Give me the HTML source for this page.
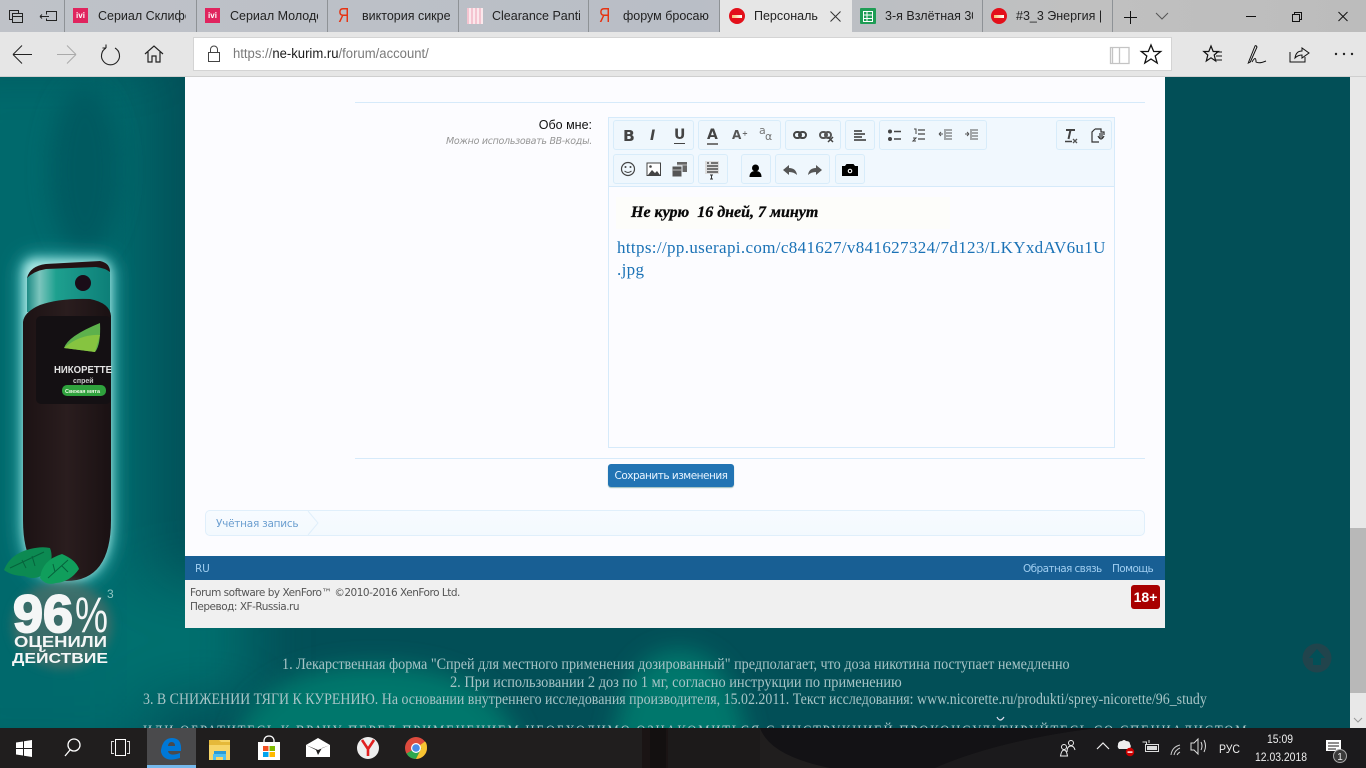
<!DOCTYPE html>
<html lang="ru"><head><meta charset="utf-8"><title>Персональные данные</title>
<style>
*{box-sizing:border-box}
html,body{margin:0;padding:0;width:1366px;height:768px;overflow:hidden;font-family:"Liberation Sans","DejaVu Sans",sans-serif;background:#024f57}
body{position:relative}
.a{position:absolute}
.t{position:absolute;white-space:nowrap}
svg{position:absolute;overflow:visible}
.tab{position:absolute;top:0;height:32px;border-right:1px solid #8e9296;overflow:hidden}
.tab span{position:absolute;left:32px;top:9px;font-size:12.5px;color:#222;white-space:nowrap;width:88px;overflow:hidden}
.ivi{position:absolute;left:8px;top:8px;width:15px;height:15px;background:#e0245e;color:#fff;font-size:8px;font-weight:bold;text-align:center;line-height:15px}
.ya{position:absolute;left:10px;top:6px;color:#e63312;font-size:20px;line-height:20px;transform-origin:0 0;transform:scaleX(.78)}
.stop{position:absolute;left:7px;top:8px;width:16px;height:16px;border-radius:50%;background:#e3101a}
.stop:after{content:"";position:absolute;left:3px;top:6.5px;width:10px;height:3px;background:linear-gradient(90deg,#f8c070,#fff)}
.grp{position:absolute;background:#eff7fd;border:1px solid #d8ecfa;border-radius:3px;height:30px}
.sc{font-family:"Liberation Serif",serif;color:#a7c4c6}
.sc span{position:absolute;display:block;transform-origin:0 0;white-space:nowrap}
</style></head><body>

<!-- page background -->
<svg style="left:0;top:0;overflow:hidden" width="1366" height="768" viewBox="0 0 1366 768">
<defs>
<filter id="b1" x="-50%" y="-50%" width="200%" height="200%"><feGaussianBlur stdDeviation="30"/></filter>
<filter id="b3" x="-50%" y="-50%" width="200%" height="200%"><feGaussianBlur stdDeviation="12"/></filter>
<filter id="b2" x="-50%" y="-50%" width="200%" height="200%"><feGaussianBlur stdDeviation="5"/></filter>
<filter id="b4" x="-50%" y="-50%" width="200%" height="200%"><feGaussianBlur stdDeviation="9"/></filter>
<linearGradient id="can" x1="0" x2="1"><stop offset="0" stop-color="#1c1214"/><stop offset=".5" stop-color="#2a1d1e"/><stop offset="1" stop-color="#1a1113"/></linearGradient>
<linearGradient id="cap" x1="0" x2="1"><stop offset="0" stop-color="#1d8b85"/><stop offset=".15" stop-color="#7cc5bd"/><stop offset=".35" stop-color="#1ea08f"/><stop offset="1" stop-color="#0d7f78"/></linearGradient>
</defs>
<rect width="1366" height="768" fill="#024f57"/>
<g filter="url(#b1)">
<rect x="-60" y="60" width="215" height="708" fill="#03696c"/>
<path d="M90 580H250V700H90Z" fill="#02706e"/>
</g>
<ellipse cx="85" cy="170" rx="35" ry="85" fill="#025a60" filter="url(#b3)"/>
<path d="M230 768Q240 665 375 665Q510 665 525 768Z" fill="#03776c" filter="url(#b3)"/>
<path d="M610 768Q620 650 678 650Q740 650 750 768Z" fill="#03776c" filter="url(#b3)"/>
<!-- spray can -->
<path d="M18 272Q20 254 38 254L100 256Q116 258 116 274V520Q116 586 66 586Q18 586 18 520Z" fill="#2fa6a6" filter="url(#b4)"/>
<path d="M23 272Q24 259 36 259L100 260Q111 262 111 274V520Q111 581 66 581Q23 581 23 520Z" fill="#a9e6e3" filter="url(#b2)"/>
<path d="M27 312V278Q30 266 46 264L100 262Q110 264 110 274V312Z" fill="url(#cap)"/>
<path d="M27 278Q30 266 46 264L100 261Q110 263 110 272Q105 268 96 267L46 269Q34 271 27 278Z" fill="#241214"/>
<circle cx="83" cy="283" r="8" fill="#1a0d18"/>
<path d="M23 322Q24 312 40 305Q60 298 90 299Q110 303 111 316V520Q111 581 66 581Q23 581 23 520Z" fill="url(#can)"/>
<rect x="36" y="316" width="75" height="88" rx="5" fill="#141013"/>
<path d="M100 323Q101 345 95 352L64 348Q68 336 100 323Z" fill="#5db14c"/>
<path d="M64 348L95 352L100 335Q80 334 64 348Z" fill="#86c440"/>
<rect x="62" y="385" width="44" height="11" rx="5" fill="#2fa23d"/>
<text x="54" y="373" font-family="Liberation Sans" font-size="10" font-weight="bold" fill="#e4e4e4" textLength="58" lengthAdjust="spacingAndGlyphs">НИКОРЕТТЕ</text>
<text x="73" y="383" font-family="Liberation Sans" font-size="7" font-weight="bold" fill="#c8c8c8">спрей</text>
<text x="65" y="393" font-family="Liberation Sans" font-size="5.500" font-weight="bold" fill="#e8f5e0">Свежая мята</text>
<ellipse cx="62" cy="625" rx="50" ry="44" fill="#526e68" opacity=".7" filter="url(#b2)"/>
<!-- mint leaf -->
<path d="M4 570Q10 554 30 549Q42 546 50 548Q54 558 48 570Q38 582 24 576Q12 576 4 570Z" fill="#0c8a52"/>
<path d="M40 578Q42 560 62 554Q76 560 79 569Q70 582 56 583Q46 586 40 578Z" fill="#109e5c"/>
<path d="M10 568L44 552M22 560l4 8M32 556l3 10M48 578L68 560M55 572l-2-8M62 566l6 6" stroke="#06633c" fill="none"/>
<g font-family="Liberation Sans" font-weight="bold" fill="#f4f6f6">
<text x="13" y="632" font-size="53" stroke="#f4f6f6" stroke-width="2" textLength="60" lengthAdjust="spacingAndGlyphs">96</text>
<text x="75" y="632" font-size="50" font-weight="normal" textLength="33" lengthAdjust="spacingAndGlyphs">%</text>
<text x="14" y="647" font-size="16" textLength="93" lengthAdjust="spacingAndGlyphs">ОЦЕНИЛИ</text>
<text x="12" y="663" font-size="15" textLength="96" lengthAdjust="spacingAndGlyphs">ДЕЙСТВИЕ</text>
</g>
<text x="107" y="598" font-family="Liberation Sans" font-size="12" fill="#8fc5c2">3</text>
<!-- back to top -->
<circle cx="1317" cy="658" r="14.500" fill="#21444c"/>
<path d="M1317 649l8 9h-4v7h-8v-7h-4z" fill="#024f57"/>
<path d="M997 717Q1000 723 1004 717" stroke="#dde" stroke-width="1.200" fill="none"/>
</svg>

<div class="sc a" style="left:0;top:656px;width:1350px;height:72px;font-size:16px;line-height:17px;overflow:hidden">
<span style="left:282px;top:0;transform:scaleX(.886)">1. Лекарственная форма "Спрей для местного применения дозированный" предполагает, что доза никотина поступает немедленно</span>
<span style="left:450px;top:18px;transform:scaleX(.897)">2. При использовании 2 доз по 1 мг, согласно инструкции по применению</span>
<span style="left:143px;top:35px;transform:scaleX(.87)">3. В СНИЖЕНИИ ТЯГИ К КУРЕНИЮ. На основании внутреннего исследования производителя, 15.02.2011. Текст исследования: www.nicorette.ru/produkti/sprey-nicorette/96_study</span>
<span style="left:143px;top:55px;height:17px;overflow:hidden;padding-top:12px;line-height:17px;letter-spacing:2.2px;transform:scaleX(.795)">ИЛИ ОБРАТИТЕСЬ К ВРАЧУ ПЕРЕД ПРИМЕНЕНИЕМ НЕОБХОДИМО ОЗНАКОМИТЬСЯ С ИНСТРУКЦИЕЙ ПРОКОНСУЛЬТИРУЙТЕСЬ СО СПЕЦИАЛИСТОМ</span>
</div>

<!-- forum content -->
<div class="a" style="left:185px;top:77px;width:980px;height:479px;background:#fcfcff"></div>
<div class="a" style="left:355px;top:102px;width:790px;height:1px;background:#d6eafa"></div>
<div class="a" style="left:355px;top:458px;width:790px;height:1px;background:#d6eafa"></div>
<div class="t" style="left:492px;width:100px;text-align:right;top:118px;font-size:12.500px;color:#111">Обо мне:</div>
<div class="t" style="left:412px;width:180px;text-align:right;top:136px;font-size:9.500px;color:#969696;font-style:italic;font-family:'DejaVu Sans',sans-serif;letter-spacing:-.3px">Можно использовать BB-коды.</div>

<!-- editor -->
<div class="a" style="left:608px;top:117px;width:507px;height:331px;background:#fcfcff;border:1px solid #d6eafa"></div>
<div class="a" style="left:609px;top:118px;width:505px;height:69px;background:#f1f8fe;border-bottom:1px solid #d6eafa"></div>
<div class="grp" style="left:613px;top:120px;width:81px"></div>
<div class="grp" style="left:698px;top:120px;width:83px"></div>
<div class="grp" style="left:785px;top:120px;width:56px"></div>
<div class="grp" style="left:845px;top:120px;width:30px"></div>
<div class="grp" style="left:879px;top:120px;width:108px"></div>
<div class="grp" style="left:1056px;top:120px;width:56px"></div>
<div class="grp" style="left:613px;top:154px;width:81px"></div>
<div class="grp" style="left:698px;top:154px;width:30px"></div>
<div class="grp" style="left:741px;top:154px;width:30px"></div>
<div class="grp" style="left:775px;top:154px;width:55px"></div>
<div class="grp" style="left:835px;top:154px;width:30px"></div>
<div class="t" style="left:623px;top:127px;font:bold 15.500px 'DejaVu Sans',sans-serif;color:#444">B</div>
<div class="t" style="left:650px;top:128px;font:italic bold 14px 'DejaVu Sans',sans-serif;color:#444">I</div>
<div class="t" style="left:674px;top:128px;font:bold 14px 'DejaVu Sans',sans-serif;color:#444;border-bottom:1.500px solid #444;line-height:15px">U</div>
<div class="t" style="left:707px;top:128px;font:bold 14px 'DejaVu Sans',sans-serif;color:#444;border-bottom:2px solid #777;line-height:15px">A</div>
<div class="t" style="left:732px;top:128px;font:bold 12px 'DejaVu Sans',sans-serif;color:#555">A</div>
<div class="t" style="left:742px;top:130px;font:bold 7px 'DejaVu Sans',sans-serif;color:#555">÷</div>
<div class="t" style="left:759px;top:124px;font:11px 'DejaVu Sans',sans-serif;color:#777">a</div>
<div class="t" style="left:765px;top:130px;font:11px 'DejaVu Sans',sans-serif;color:#777">α</div>
<svg style="left:0;top:0" width="1366" height="768" viewBox="0 0 1366 768" fill="none">
<g stroke="#444" stroke-width="2"><rect x="794" y="132" width="7" height="6" rx="3"/><rect x="799" y="132" width="7" height="6" rx="3"/></g>
<g stroke="#555" stroke-width="2"><rect x="820" y="132" width="7" height="6" rx="3"/><rect x="825" y="132" width="6" height="6" rx="3"/></g>
<path d="M828 137l5 5M833 137l-5 5" stroke="#444" stroke-width="1.500"/>
<path d="M854 131h8M854 134h11M854 137h8M854 140h12" stroke="#333" stroke-width="1.500"/>
<g fill="#444"><circle cx="890" cy="131.500" r="2"/><circle cx="890" cy="139" r="2"/></g>
<path d="M894 131.500h7M894 139h7" stroke="#444" stroke-width="1.500"/>
<path d="M914 129h2v5M913 138h3l-3 3h3" stroke="#444"/>
<path d="M918 130h7M918 134h7M918 139h7" stroke="#444" stroke-width="1.300"/>
<path d="M939 134h4M939 134l2-2M939 134l2 2M946 130h6M946 133h6M946 136h6M946 139h6M945 129v11" stroke="#555"/>
<path d="M965 134h4M969 134l-2-2M969 134l-2 2M972 130h6M972 133h6M972 136h6M972 139h6M971 129v11" stroke="#555"/>
<path d="M1066 130h9M1070.500 130l-2 9" stroke="#444" stroke-width="2"/>
<path d="M1065 141.500h7" stroke="#444" stroke-width="1.500"/>
<path d="M1073 139l4 4M1077 139l-4 4" stroke="#555" stroke-width="1.300"/>
<path d="M1095 129h6v3h3v3M1095 129l-3 3v10h7" stroke="#333" stroke-width="1.200"/>
<path d="M1100 133v6M1102 133v6M1098 136q3 6 6 0" stroke="#333" stroke-width="1.200"/>
<circle cx="628" cy="169" r="6.500" stroke="#444" stroke-width="1.200"/>
<circle cx="625.500" cy="167" r="1" fill="#444"/><circle cx="630.500" cy="167" r="1" fill="#444"/>
<path d="M624.500 171q3.500 3 7 0" stroke="#444"/>
<rect x="647" y="163" width="13.500" height="12.500" fill="#fff" stroke="#444"/>
<path d="M648 175l4-5 3 3 2-2 3 4z" fill="#444"/><circle cx="650.500" cy="166.500" r="1.300" fill="#444"/>
<rect x="677" y="162" width="10" height="10" fill="#666"/><rect x="672" y="166" width="10" height="11" fill="#555" stroke="#eff7fd"/>
<path d="M677 165h10M672 170h10" stroke="#bbb"/>
<rect x="705" y="161" width="14" height="13" fill="#ddd"/>
<path d="M707 163h2M711 163h7M707 166h11M707 169h11M707 172h11" stroke="#333" stroke-width="1.300"/>
<path d="M710 175h3M711.500 175v4M710 179h3" stroke="#333"/>
<circle cx="755.500" cy="168" r="3.500" fill="#000"/>
<path d="M749.500 177q0-6 6-6q6 0 6 6z" fill="#000"/>
<path d="M783 170l6-5v3q7 0 8 7q-3-3-8-3v3z" fill="#555"/>
<path d="M822 170l-6-5v3q-7 0-8 7q3-3 8-3v3z" fill="#555"/>
<path d="M842 166h3l1.500-2h7l1.500 2h3v10h-16z" fill="#000"/><circle cx="850" cy="171" r="2.300" fill="#fff"/><circle cx="850" cy="171" r="1.200" fill="#000"/>
</svg>

<div class="a" style="left:616px;top:197px;width:334px;height:32px;background:#fdfdfa"></div>
<div class="t" style="left:631px;top:204px;font:italic bold 16px 'Liberation Serif',serif;color:#0a0a0a;-webkit-text-stroke:.3px #000">Не курю&nbsp; 16 дней, 7 минут</div>
<div class="t" style="left:617px;top:237px;font:17px/22px 'Liberation Serif',serif;color:#1a72b6;letter-spacing:.35px">https://pp.userapi.com/c841627/v841627324/7d123/LKYxdAV6u1U<br>.jpg</div>

<div class="a" style="left:608px;top:464px;width:126px;height:23px;background:#2274b4;border-radius:3px;box-shadow:0 1px 1px #9bb"></div>
<div class="t" style="left:608px;width:126px;text-align:center;top:470px;font:10.500px 'DejaVu Sans',sans-serif;letter-spacing:-.5px;color:#e8f4ff">Сохранить изменения</div>

<!-- breadcrumb -->
<div class="a" style="left:205px;top:510px;width:940px;height:26px;background:linear-gradient(#f7fbff,#f3f9fe);border:1px solid #e0effb;border-radius:5px"></div>
<svg style="left:0;top:0" width="1366" height="768" fill="none"><path d="M308 511L318 523L308 535" stroke="#e0effb"/></svg>
<div class="t" style="left:216px;top:518px;font:10.500px 'DejaVu Sans',sans-serif;letter-spacing:-.25px;color:#6b9fd0">Учётная запись</div>

<!-- footer -->
<div class="a" style="left:185px;top:556px;width:980px;height:24px;background:#185f94"></div>
<div class="t" style="left:195px;top:563px;font:10.500px 'DejaVu Sans',sans-serif;color:#9fcdf0;letter-spacing:-.2px">RU</div>
<div class="t" style="left:1023px;top:563px;font:10.500px 'DejaVu Sans',sans-serif;color:#9fcdf0;letter-spacing:-.6px">Обратная связь</div>
<div class="t" style="left:1112px;top:563px;font:10.500px 'DejaVu Sans',sans-serif;color:#9fcdf0;letter-spacing:-.6px">Помощь</div>
<div class="a" style="left:185px;top:580px;width:980px;height:48px;background:#f0f0f0"></div>
<div class="t" style="left:190px;top:586px;font:10.500px/14px 'DejaVu Sans',sans-serif;color:#555;letter-spacing:-.49px">Forum software by XenForo™ ©2010-2016 XenForo Ltd.<br>Перевод: XF-Russia.ru</div>
<div class="a" style="left:1131px;top:585px;width:29px;height:24px;background:#a80000;border-radius:3px;color:#fff;font:bold 14px/24px 'Liberation Sans',sans-serif;text-align:center">18+</div>

<!-- scrollbar -->
<div class="a" style="left:1350px;top:77px;width:16px;height:651px;background:#e8e8e8"></div>
<div class="a" style="left:1350px;top:528px;width:16px;height:165px;background:#b8b8b8"></div>
<svg style="left:0;top:0" width="1366" height="768" fill="none"><path d="M1354 718l4 4 4-4" stroke="#999"/></svg>

<!-- nav bar -->
<div class="a" style="left:0;top:32px;width:1366px;height:45px;background:#e6e6e6;border-bottom:1px solid #cfcfcf"></div>
<div class="a" style="left:193px;top:37px;width:979px;height:34px;background:#fff;border:1px solid #d4d4d4"></div>
<div class="t" style="left:233px;top:46px;font:13.500px 'Liberation Sans',sans-serif;color:#7a7a7a;transform-origin:0 0;transform:scaleX(.97)">https://<span style="color:#1a1a1a">ne-kurim.ru</span>/forum/account/</div>

<!-- tab strip -->
<div class="a" style="left:0;top:0;width:1366px;height:32px;background:linear-gradient(90deg,#bfc2c8,#b9bec6 50%,#c0c0c0 80%,#bcbcbc)"></div>
<div class="tab" style="left:64px;width:1px"></div>
<div class="tab" style="left:65px;width:132px"><div class="ivi">ivi</div><span style="left:33px">Сериал Склифосовский</span></div>
<div class="tab" style="left:197px;width:131px"><div class="ivi">ivi</div><span style="left:33px">Сериал Молодёжка</span></div>
<div class="tab" style="left:328px;width:131px"><div class="ya">Я</div><span style="left:34px">виктория сикрет</span></div>
<div class="tab" style="left:459px;width:130px"><div class="a" style="left:8px;top:8px;width:16px;height:16px;background:repeating-linear-gradient(90deg,#f4c4d0 0 2px,#fbe8ec 2px 4px)"></div><span style="left:33px">Clearance Panties</span></div>
<div class="tab" style="left:589px;width:131px"><div class="ya">Я</div><span style="left:34px;width:88px">форум бросаю курить</span></div>
<div class="a" style="left:720px;top:0;width:132px;height:33px;background:#e6e6e6"><div class="stop" style="left:9px;top:8px"></div><span class="t" style="left:34px;top:9px;font-size:12.500px;color:#222">Персональ</span></div>
<div class="tab" style="left:852px;width:131px"><div class="a" style="left:8px;top:8px;width:16px;height:16px;background:#1f9d55;border-radius:1px"></div><svg style="left:0;top:0" width="30" height="32" fill="none"><rect x="11.500" y="11.500" width="9" height="10" stroke="#fff"/><path d="M11 15h10M11 18.500h10M15 11v11" stroke="#fff"/></svg><span style="left:33px;width:88px">3-я Взлётная 30</span></div>
<div class="tab" style="left:983px;width:130px"><div class="stop" style="left:8px"></div><span style="left:33px;width:90px">#3_3 Энергия |</span></div>

<svg style="left:0;top:0" width="1366" height="78" viewBox="0 0 1366 78" fill="none" stroke="#222">
<rect x="9.500" y="10.500" width="9" height="9"/><rect x="12.500" y="13.500" width="10" height="9" fill="#c0c4c8"/><path d="M12.500 16.500h10"/>
<path d="M46.500 14.500v-3h10v9h-10v-2M40 16.500h9M40 16.500l2-2M40 16.500l2 2"/>
<path d="M830.500 11.500l10 10M840.500 11.500l-10 10" stroke="#333"/>
<path d="M1130.500 11v13M1124 17.500h13" stroke="#111"/>
<path d="M1156 13l6 6 6-6" stroke="#555"/>
<path d="M1246 16.500h10" stroke="#111"/>
<rect x="1292.500" y="14.500" width="7" height="7" stroke="#111"/><path d="M1294.500 14.500v-2h7v7h-2" stroke="#111"/>
<path d="M1338.500 12l9 9M1347.500 12l-9 9" stroke="#111"/>
<!-- nav -->
<path d="M13 54.500h19M13 54.500l9-9M13 54.500l9 9" stroke="#222"/>
<path d="M57 54.500h19M76 54.500l-9-9M76 54.500l-9 9" stroke="#aaa"/>
<path d="M106 48a9 9 0 1 0 9 0M106 48v-3.500M106 48h-3.500" stroke="#222" stroke-width="1.100"/>
<path d="M145 54l9-8 9 8M148 52v10h4v-6h4v6h4V52" stroke="#222" stroke-width="1.200"/>
<rect x="208.500" y="52.500" width="11" height="9" stroke="#444"/><path d="M210.500 52.500v-3a3.500 3.500 0 0 1 7 0v3" stroke="#444"/>
<path d="M1110.500 47.500h9v16h-9zM1119.500 47.500h9.500v16h-9.500M1112.500 47.500v16" stroke="#c4c4c4" stroke-width="1.300"/>
<path d="M1151 45l2.700 6.500h7l-5.500 4.500 2 7-6.200-4-6.200 4 2-7-5.500-4.500h7z" stroke="#111" stroke-width="1.300"/>
<path d="M1211 46l2.200 5.500h5l-4 3.500 1.500 6-4.700-3.200-4.700 3.200 1.500-6-4-3.500h5z" stroke="#111" stroke-width="1.200"/>
<path d="M1216 52h6M1216 56h6M1216 60h6" stroke="#111"/>
<path d="M1255 46l-6 15-.7 2 2-1 6.700-15q-1-2-2-1zM1252 62q4-7 4 0q3 2 10-1" stroke="#111"/>
<path d="M1290 52v10h15v-5" stroke="#111"/><path d="M1295 58q1-7 7-7v-3l7 5-7 5v-3q-4 0-7 3z" stroke="#111"/>
<g fill="#222" stroke="none"><circle cx="1336" cy="54" r="1.200"/><circle cx="1344" cy="54" r="1.200"/><circle cx="1352" cy="54" r="1.200"/></g>
</svg>

<!-- taskbar -->
<svg style="left:0;top:728px;overflow:hidden" width="1366" height="40" viewBox="0 0 1366 40">
<rect width="1366" height="40" fill="#201e1e"/>
<rect x="642" width="26" height="40" fill="#1a1414"/>
<rect x="650" width="16" height="40" fill="#131010"/>
<rect x="668" width="92" height="40" fill="#1c1a1a"/>
<path d="M760 0Q770 28 830 40H935Q1000 12 1098 0Z" fill="#131215"/>
<path d="M1098 0H1366V40H935Q1000 12 1098 0Z" fill="#1b1a1c"/>
<rect x="147" width="49" height="40" fill="#4a4a4c"/><rect x="147" y="37" width="49" height="3" fill="#76b9ed"/>
<path d="M16 14.500l7-1v6.500h-7zM24 13.300l8-1.300v8h-8zM16 21h7v6.500l-7-1zM24 21h8v8l-8-1.300z" fill="#fff"/>
<circle cx="74" cy="17" r="6" fill="none" stroke="#fff" stroke-width="1.300"/><path d="M70 22l-5 6" stroke="#fff" stroke-width="1.300"/>
<path d="M114 13.500h-2.500v12h2.500M127 13.500h2.500v12h-2.500" fill="none" stroke="#ddd"/><rect x="115.500" y="11.500" width="10" height="16" fill="none" stroke="#fff"/>
<!-- edge -->
<path fill-rule="evenodd" d="M161 22Q163 10 172 10Q182 10 181 23H168Q169 29 180 25V30Q164 35 161 24ZM168 18H175Q175 14 171.500 14Q168.500 14 168 18Z" fill="#0078d7"/>
<path d="M209 12h21v20h-21z" fill="#f6d568"/><path d="M209 12h10l2 2h9v3h-21z" fill="#e5b93a"/><path d="M213 26h13v6h-3v-3h-7v3h-3z" fill="#4fc1f0"/><rect x="214" y="23" width="12" height="3" fill="#2a9bd7"/>
<path d="M258 14h22v18h-22z" fill="#fff"/><path d="M264 14v-2q1-4 5-4t5 4v2" fill="none" stroke="#fff" stroke-width="1.300"/>
<rect x="263" y="18" width="5.500" height="5" fill="#f25022"/><rect x="269.500" y="18" width="5.500" height="5" fill="#7fba00"/><rect x="263" y="24" width="5.500" height="5" fill="#00a4ef"/><rect x="269.500" y="24" width="5.500" height="5" fill="#ffb900"/>
<!-- mail -->
<path d="M306 17L318 10L330 17V29H306Z" fill="#fff"/><path d="M306 17L318 22L330 17L322 20L318 27L316 22Z" fill="#201e1e"/>
<circle cx="368" cy="20" r="11" fill="#eee"/><path d="M362 12l6 9v7M374 12l-6 9" fill="none" stroke="#e02020" stroke-width="2.600"/>
<circle cx="416" cy="20" r="11" fill="#dd4b3e"/><path d="M416 20L406.500 25.500A11 11 0 0 0 416 31L421.500 20z" fill="#2ea84f"/><path d="M416 20l5.500 0L416 31A11 11 0 0 0 427 20Q427 15 425 13.500z" fill="#f7c331"/><circle cx="416" cy="20" r="5" fill="#fff"/><circle cx="416" cy="20" r="3.800" fill="#4a8ce8"/>
<!-- tray -->
<g fill="none" stroke="#eee">
<circle cx="1071" cy="15" r="2.500"/><path d="M1067 24q0-6 4-6q3 0 4 4"/><circle cx="1064" cy="19" r="2.500"/><path d="M1060.500 28q1-6 3.500-6t3.500 6z"/>
<path d="M1097 21l6-6 6 6" stroke-width="1.200"/>
<path d="M1142.500 14h4v2M1149 12v3" stroke="#ddd"/>
<rect x="1145.500" y="16.500" width="13" height="7" stroke="#ddd"/>
<path d="M1171 27q1-8 9-10M1174 27q1-5 6-7M1177 27q1-2 3-3" stroke="#ccc"/>
<path d="M1191 15v7h3l4 4V11l-4 4zM1201 14q2 4 0 8M1204 12q3 6 0 12" stroke="#ddd"/>
</g>
<rect x="1147" y="18" width="10" height="4" fill="#ddd"/>
<path d="M1118 17q0-4 4-4q2-2 4 0q4 0 4 3q2 3-1 5h-10q-2-2-1-4z" fill="#eee"/><circle cx="1130" cy="24" r="4.200" fill="#c00"/><rect x="1127.500" y="23.400" width="5" height="1.400" fill="#fff"/>
<path d="M1326 12h15v11h-15z" fill="#fff"/><path d="M1328 15h11M1328 18h11M1328 21h8" stroke="#201e1e"/>
<circle cx="1340" cy="28" r="6.500" fill="#3a3a3a" stroke="#aaa"/>
<text x="1340" y="32" font-family="Liberation Sans" font-size="10" fill="#eee" text-anchor="middle">1</text>
<text x="1219" y="25" font-family="Liberation Sans" font-size="11.500" fill="#eee" textLength="21" lengthAdjust="spacingAndGlyphs">РУС</text>
<text x="1267" y="15" font-family="Liberation Sans" font-size="11.500" fill="#eee" textLength="26" lengthAdjust="spacingAndGlyphs">15:09</text>
<text x="1255" y="33" font-family="Liberation Sans" font-size="11.500" fill="#eee" textLength="52" lengthAdjust="spacingAndGlyphs">12.03.2018</text>
</svg>
</body></html>
